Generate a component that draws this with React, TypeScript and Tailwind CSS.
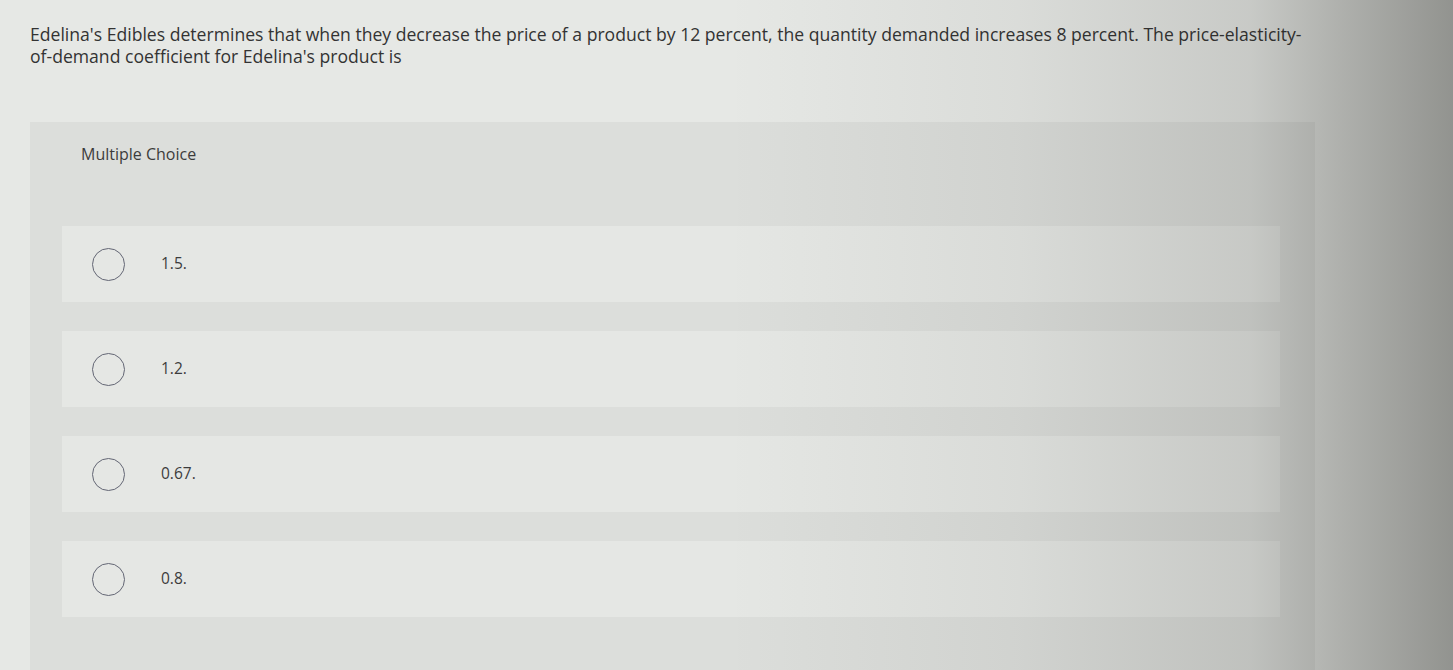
import React from "react";

const options = ["1.5.", "1.2.", "0.67.", "0.8."];

const App = () => {
  return (
    <div
      className="relative h-[670px] w-full overflow-hidden bg-[#e6e8e5] text-[#333333]"
      style={{ fontFamily: "'Open Sans', Lato, sans-serif" }}
    >
      <div className="whitespace-nowrap pl-[30px] pt-[23px] text-[17.6px] leading-[22px]">
        Edelina's Edibles determines that when they decrease the price of a
        product by 12 percent, the quantity demanded increases 8 percent. The
        price-elasticity-
        <br />
        of-demand coefficient for Edelina's product is
      </div>

      <section className="ml-[30px] mr-[138px] mt-[55px] h-[560px] bg-[#dcdedb]">
        <div className="flex h-[64px] items-center pl-[51px] text-[16px] text-[#3c3c3c]">
          Multiple Choice
        </div>
        <div className="mt-[40px] flex flex-col gap-[29px] pl-[32px] pr-[35px]">
          {options.map((o) => (
            <div
              key={o}
              className="flex h-[76px] items-center bg-[#e5e7e4] pl-[30px]"
            >
              <span className="h-[33px] w-[33px] rounded-full border-[1.5px] border-[#636674]" />
              <span className="ml-[36px] text-[15.5px] text-[#3c3c3c]">{o}</span>
            </div>
          ))}
        </div>
      </section>

      <div className="pointer-events-none absolute inset-0 bg-[linear-gradient(to_right,transparent_0%,transparent_50%,rgba(30,30,25,0.06)_70%,rgba(30,30,25,0.15)_86%,rgba(30,30,25,0.27)_92%,rgba(30,30,25,0.42)_100%)]" />
    </div>
  );
};

export default App;
